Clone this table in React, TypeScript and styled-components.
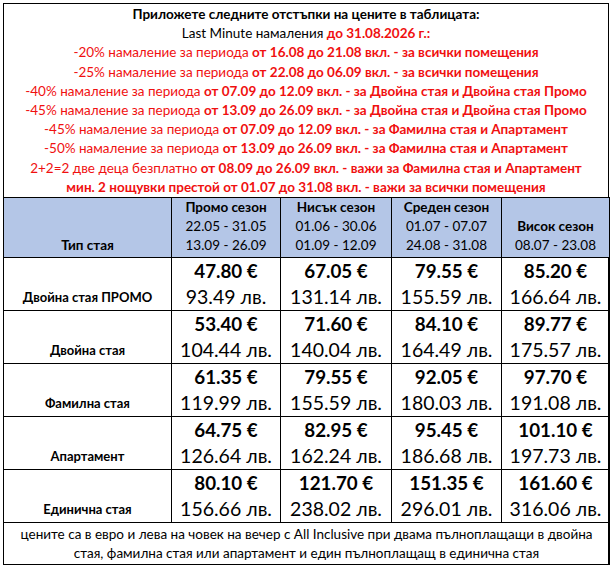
import * as React from 'react';
import styled, { createGlobalStyle } from 'styled-components';

const GlobalStyle = createGlobalStyle`
  html, body {
    margin: 0;
    padding: 0;
    background: #fff;
  }
  body {
    font-family: Lato, "Open Sans", "Liberation Sans", sans-serif;
    color: #000;
  }
`

const Sheet = styled.div`
  width: 604px;
  margin: 3px 0 0 3px;
  border: 1px solid #000;
`

const Notice = styled.div`
  padding: 1px 0 0 0;
  text-align: center;
  font-size: 13.5px;
  line-height: 19.2px;
`

declare type LineProps = {
  red?: boolean
  bold?: boolean
}

const Line = styled.div<LineProps>`
  color: ${(props) => (props.red ? '#f01010' : '#000')};
  font-weight: ${(props) => (props.bold ? 700 : 400)};
  white-space: nowrap;
`

const B = styled.b`
  font-weight: 700;
`

const RedB = styled.b`
  font-weight: 700;
  color: #f01010;
`

const PriceTable = styled.table`
  width: 606px;
  margin: 0 -1px -1px -1px;
  border-collapse: collapse;
  table-layout: fixed;
`

const HeadCell = styled.th`
  background-color: #b4c6e7;
  border: 1px solid #000;
  vertical-align: bottom;
  text-align: center;
  font-size: 13.5px;
  line-height: 19px;
  font-weight: 400;
  padding: 0 0 2px 0;
  height: 57px;
  white-space: nowrap;
`

const SeasonName = styled.div`
  font-weight: 700;
`

const RoomCell = styled.td`
  border: 1px solid #000;
  vertical-align: bottom;
  text-align: center;
  font-size: 13px;
  line-height: 16px;
  font-weight: 700;
  padding: 0 0 5px 0;
  height: 47px;
  white-space: nowrap;
`

const PriceCell = styled.td`
  border: 1px solid #000;
  text-align: center;
  vertical-align: top;
  padding: 0;
  height: 52px;
`

const Euro = styled.div`
  height: 25px;
  font-size: 18.8px;
  font-weight: 700;
  line-height: 25px;
  white-space: nowrap;
`

const Lev = styled.div`
  height: 27px;
  font-size: 19.5px;
  line-height: 27px;
  white-space: nowrap;
`

const FootCell = styled.td`
  border: 1px solid #000;
  text-align: center;
  font-size: 13.5px;
  line-height: 19px;
  padding: 2px 0 1px 0;
`

type Season = { name: string; dates: string[] }

const seasons: Season[] = [
  { name: 'Промо сезон', dates: ['22.05 - 31.05', '13.09 - 26.09'] },
  { name: 'Нисък сезон', dates: ['01.06 - 30.06', '01.09 - 12.09'] },
  { name: 'Среден сезон', dates: ['01.07 - 07.07', '24.08 - 31.08'] },
  { name: 'Висок сезон', dates: ['08.07 - 23.08'] },
]

type Room = { name: string; prices: [string, string][] }

const rooms: Room[] = [
  { name: 'Двойна стая ПРОМО', prices: [['47.80', '93.49'], ['67.05', '131.14'], ['79.55', '155.59'], ['85.20', '166.64']] },
  { name: 'Двойна стая', prices: [['53.40', '104.44'], ['71.60', '140.04'], ['84.10', '164.49'], ['89.77', '175.57']] },
  { name: 'Фамилна стая', prices: [['61.35', '119.99'], ['79.55', '155.59'], ['92.05', '180.03'], ['97.70', '191.08']] },
  { name: 'Апартамент', prices: [['64.75', '126.64'], ['82.95', '162.24'], ['95.45', '186.68'], ['101.10', '197.73']] },
  { name: 'Единична стая', prices: [['80.10', '156.66'], ['121.70', '238.02'], ['151.35', '296.01'], ['161.60', '316.06']] },
]

// discount lines: [plain part, bold part]
const discounts: [string, string][] = [
  ['-20% намаление за периода ', 'от 16.08 до 21.08 вкл. - за всички помещения'],
  ['-25% намаление за периода ', 'от 22.08 до 06.09 вкл. - за всички помещения'],
  ['-40% намаление за периода ', 'от 07.09 до 12.09 вкл. - за Двойна стая и Двойна стая Промо'],
  ['-45% намаление за периода ', 'от 13.09 до 26.09 вкл. - за Двойна стая и Двойна стая Промо'],
  ['-45% намаление за периода ', 'от 07.09 до 12.09 вкл. - за Фамилна стая и Апартамент'],
  ['-50% намаление за периода ', 'от 13.09 до 26.09 вкл. - за Фамилна стая и Апартамент'],
  ['2+2=2 две деца безплатно ', 'от 08.09 до 26.09 вкл. - важи за Фамилна стая и Апартамент'],
]

const App: React.FunctionComponent = () => {
  return (
    <>
      <GlobalStyle />
      <Sheet>
        <Notice>
          <Line bold>Приложете следните отстъпки на цените в таблицата:</Line>
          <Line>
            Last Minute намаления <RedB>до 31.08.2026 г.:</RedB>
          </Line>
          {discounts.map(([plain, bold], i) => (
            <Line red key={i}>
              {plain}
              <B>{bold}</B>
            </Line>
          ))}
          <Line red bold>мин. 2 нощувки престой от 01.07 до 31.08 вкл. - важи за всички помещения</Line>
        </Notice>
        <PriceTable>
          <colgroup>
            <col style={{ width: 168 }} />
            <col style={{ width: 109 }} />
            <col style={{ width: 111 }} />
            <col style={{ width: 110 }} />
            <col style={{ width: 108 }} />
          </colgroup>
          <thead>
            <tr>
              <HeadCell>
                <SeasonName>Тип стая</SeasonName>
              </HeadCell>
              {seasons.map((s) => (
                <HeadCell key={s.name}>
                  <SeasonName>{s.name}</SeasonName>
                  {s.dates.map((d) => (
                    <div key={d}>{d}</div>
                  ))}
                </HeadCell>
              ))}
            </tr>
          </thead>
          <tbody>
            {rooms.map((room) => (
              <tr key={room.name}>
                <RoomCell>{room.name}</RoomCell>
                {room.prices.map(([eur, lev], i) => (
                  <PriceCell key={i}>
                    <Euro>{eur} €</Euro>
                    <Lev>{lev} лв.</Lev>
                  </PriceCell>
                ))}
              </tr>
            ))}
            <tr>
              <FootCell colSpan={5}>
                цените са в евро и лева на човек на вечер с All Inclusive при двама пълноплащащи в двойна
                <br />
                стая, фамилна стая или апартамент и един пълноплащащ в единична стая
              </FootCell>
            </tr>
          </tbody>
        </PriceTable>
      </Sheet>
    </>
  )
}

export default App
